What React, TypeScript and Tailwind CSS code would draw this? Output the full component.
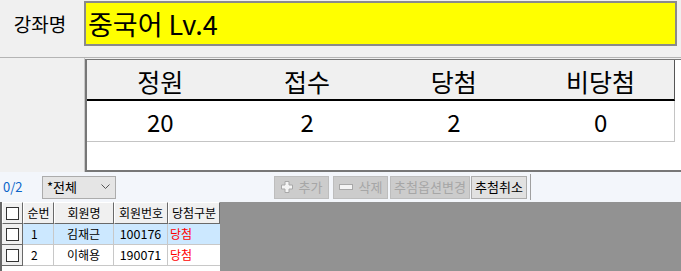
import React from 'react';

const stats = [
  { label: '정원', value: 20 },
  { label: '접수', value: 2 },
  { label: '당첨', value: 2 },
  { label: '비당첨', value: 0 },
];

const members = [
  { no: 1, name: '김재근', id: '100176', result: '당첨', selected: true },
  { no: 2, name: '이해용', id: '190071', result: '당첨', selected: false },
];

const Checkbox = () => (
  <div className="w-[13px] h-[13px] bg-white border border-[#333333]" />
);

const HeadCell: React.FC<{ w: string; children?: React.ReactNode }> = ({ w, children }) => (
  <div className={`${w} h-full flex items-center justify-center bg-[#f0f0f0] border-t border-l border-t-white border-l-white border-r border-b border-r-[#696969] border-b-[#696969]`}>
    {children}
  </div>
);

export default function App() {
  return (
    <div className="w-[681px] h-[271px] overflow-hidden bg-[#f0f0f0] text-black" style={{ fontFamily: '"Noto Sans CJK KR", "Noto Sans", sans-serif' }}>
      {/* course name */}
      <div className="flex h-[58px] border-b border-[#b4b4b4]">
        <div className="w-[84px] flex items-center justify-center text-[19px] pb-[8px] pr-[4px]">강좌명</div>
        <div className="mt-[1px] mr-[4px] h-[45px] flex-1 border-2 border-[#8a8a8a] bg-[#ffff00] flex items-center pl-[2px]">
          <span className="text-[27px] leading-none">중국어 Lv.4</span>
        </div>
      </div>

      {/* stats panel */}
      <div className="flex h-[114px]">
        <div className="w-[85px] border-r border-[#c8c8c8]" />
        <div className="flex-1 mt-[1px] bg-white border-t border-l-2 border-b-2 border-[#777777]">
          <div className="w-[588px]">
            <div className="grid grid-cols-4 h-[41px] bg-[#f0f0f0] border-b-2 border-r border-b-black border-r-[#555555]">
              {stats.map((s) => (
                <div key={s.label} className="flex items-center justify-center text-[25px] leading-none pt-[3px]">{s.label}</div>
              ))}
            </div>
            <div className="grid grid-cols-4 h-[41px] border-b border-r border-[#c4c4c4]">
              {stats.map((s) => (
                <div key={s.label} className="flex items-center justify-center text-[24px] leading-none pt-[1px]">{s.value}</div>
              ))}
            </div>
          </div>
        </div>
      </div>

      {/* member list */}
      <div className="h-[99px] bg-[#f3f6fb] flex flex-col">
        <div className="h-[30px] flex items-center">
          <span className="ml-[3px] w-[39px] text-[13px] text-[#0a64c8]">0/2</span>
          <div className="w-[74px] h-[23px] bg-[#e5e5e5] border border-[#acacac] flex items-center justify-between pl-[4px] pr-[5px] text-[13px]">
            <span>*전체</span>
            <svg width="9" height="6" viewBox="0 0 9 6"><path d="M0.5 0.5 L4.5 4.5 L8.5 0.5" fill="none" stroke="#555" strokeWidth="1" /></svg>
          </div>
          <div className="ml-[158px] flex items-center gap-[4px] text-[13px] text-[#a6a6a6]">
            <div className="w-[55px] h-[23px] bg-[#cccccc] border border-[#bdbdbd] flex items-center justify-center gap-[6px]">
              <svg width="12" height="12" viewBox="0 0 12 12"><path d="M4 0.5 H8 V4 H11.5 V8 H8 V11.5 H4 V8 H0.5 V4 H4 Z" fill="#f4f4f4" stroke="#a8a8a8" /></svg>
              <span>추가</span>
            </div>
            <div className="w-[55px] h-[23px] bg-[#cccccc] border border-[#bdbdbd] flex items-center justify-center gap-[6px]">
              <svg width="14" height="6" viewBox="0 0 14 6"><rect x="0.5" y="0.5" width="13" height="5" fill="#f4f4f4" stroke="#a8a8a8" /></svg>
              <span>삭제</span>
            </div>
            <div className="w-[80px] h-[23px] bg-[#cccccc] border border-[#bdbdbd] flex items-center justify-center -ml-[2px]">추첨옵션변경</div>
            <div className="w-[56px] h-[23px] bg-[#e1e1e1] border border-[#adadad] flex items-center justify-center text-black -ml-[3px]">추첨취소</div>
            <div className="w-px h-[26px] bg-[#a0a0a0] ml-[-1px]" />
          </div>
        </div>

        <div className="flex flex-1">
          <div className="w-[220px] bg-white border-l-2 border-[#696969] text-[12px]">
            <div className="flex h-[22px]">
              <HeadCell w="w-[21px]"><Checkbox /></HeadCell>
              <HeadCell w="w-[31px]">순번</HeadCell>
              <HeadCell w="w-[60px]">회원명</HeadCell>
              <HeadCell w="w-[54px]">회원번호</HeadCell>
              <HeadCell w="w-[52px]">당첨구분</HeadCell>
            </div>
            {members.map((m) => (
              <div key={m.no} className={`flex h-[21px] ${m.selected ? 'bg-[#cce8ff]' : 'bg-white'}`}>
                <div className="w-[21px] h-full flex items-center justify-center bg-[#f0f0f0] border-r border-b border-[#696969]">
                  <Checkbox />
                </div>
                <div className="w-[31px] h-full flex items-center pl-[8px] border-r border-b border-[#c8c8c8]">{m.no}</div>
                <div className="w-[60px] h-full flex items-center justify-center border-r border-b border-[#c8c8c8]">{m.name}</div>
                <div className="w-[54px] h-full flex items-center justify-center border-r border-b border-[#c8c8c8] text-[12.5px]">{m.id}</div>
                <div className="w-[52px] h-full flex items-center pl-[2px] border-b border-[#c8c8c8] text-[#ff0000]">{m.result}</div>
              </div>
            ))}
          </div>
          <div className="flex-1 bg-[#929292]" />
        </div>
      </div>
    </div>
  );
}
